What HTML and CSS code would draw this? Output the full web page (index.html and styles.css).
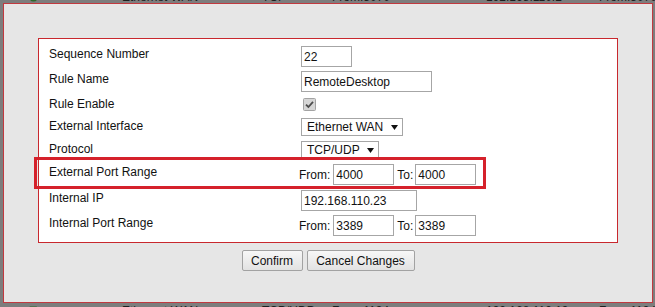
FILE: index.html
```html
<!DOCTYPE html>
<html lang="en">
<head>
  <meta charset="UTF-8" />
  <title>Port Forwarding Rule</title>
  <link rel="stylesheet" href="styles.css">
</head>
<body>

  <!-- tabela atrás do modal -->
  <div class="backdrop">
    <div class="bg-row bg-top">
      <span class="status"><svg width="9" height="9" viewBox="0 0 9 9"><circle cx="4.5" cy="4.5" r="4" fill="#2f6a2a"/></svg></span>
      <span>Ethernet WAN</span>
      <span>TCP</span>
      <span>From:3070</span>
      <span>192.168.110.2</span>
      <span>From:3070</span>
    </div>
    <div class="bg-row bg-bottom">
      <span class="status"><svg width="9" height="9" viewBox="0 0 9 9"><path d="M0.5 0.5 H8 L4.3 6 Z" fill="#2f6a2a"/></svg></span>
      <span>Ethernet WAN</span>
      <span>TCP/UDP</span>
      <span>From:1194</span>
      <span>192.168.110.19</span>
      <span>From:1194</span>
    </div>
  </div>

  <!-- modal -->
  <div class="dialog">
    <div class="form-box">
      <div class="row">
        <span class="label">Sequence Number</span>
        <div class="value"><input class="text w-seq" type="text" value="22"></div>
      </div>
      <div class="row">
        <span class="label">Rule Name</span>
        <div class="value"><input class="text w-name" type="text" value="RemoteDesktop"></div>
      </div>
      <div class="row row-check">
        <span class="label">Rule Enable</span>
        <div class="value">
          <span class="check">
            <svg width="13" height="13" viewBox="0 0 13 13">
              <rect x="0.5" y="0.5" width="12" height="12" rx="1" fill="#d6d6d6" stroke="#a3a3a3"/>
              <path d="M3 6.6 L5.4 9 L10 3.8" fill="none" stroke="#4d4d4d" stroke-width="1.8"/>
            </svg>
          </span>
        </div>
      </div>
      <div class="row row-select">
        <span class="label">External Interface</span>
        <div class="value">
          <span class="select w-iface">Ethernet WAN<svg class="caret" width="7" height="5" viewBox="0 0 7 5"><path d="M0 0 H7 L3.5 5 Z" fill="#111"/></svg></span>
        </div>
      </div>
      <div class="row row-select">
        <span class="label">Protocol</span>
        <div class="value">
          <span class="select w-proto">TCP/UDP<svg class="caret" width="7" height="5" viewBox="0 0 7 5"><path d="M0 0 H7 L3.5 5 Z" fill="#111"/></svg></span>
        </div>
      </div>
      <div class="row row-port highlight">
        <span class="label">External Port Range</span>
        <div class="value">
          <span class="from">From:</span><input class="text w-port" type="text" value="4000">
          <span class="to">To:</span><input class="text w-port" type="text" value="4000">
        </div>
      </div>
      <div class="row">
        <span class="label">Internal IP</span>
        <div class="value"><input class="text w-ip" type="text" value="192.168.110.23"></div>
      </div>
      <div class="row">
        <span class="label">Internal Port Range</span>
        <div class="value">
          <span class="from">From:</span><input class="text w-port" type="text" value="3389">
          <span class="to">To:</span><input class="text w-port" type="text" value="3389">
        </div>
      </div>
    </div>

    <div class="buttons">
      <button class="btn btn-confirm">Confirm</button>
      <button class="btn btn-cancel">Cancel Changes</button>
    </div>
  </div>

</body>
</html>
```

FILE: styles.css
```css
/* Reset básico */
*, *::before, *::after {
  margin: 0;
  padding: 0;
  box-sizing: border-box;
}
body {
  font-family: "Liberation Sans", Arial, sans-serif;
  font-size: 12px;
  color: #111;
  background-color: #7d7d7d;
  width: 655px;
  height: 307px;
  overflow: hidden;
  position: relative;
}

/* --- Tabela de fundo --- */
.backdrop {
  height: 307px;
  display: flex;
  flex-direction: column;
  justify-content: space-between;
  overflow: hidden;
}
.bg-row {
  display: grid;
  grid-template-columns: 93px 140px 70px 154px 113px 1fr;
  padding-left: 29px;
  height: 14px;
  line-height: 14px;
  color: #1e1e1e;
}
.bg-top {
  margin-top: -10px;
}
.bg-bottom {
  margin-bottom: -11px;
}
.status svg {
  display: block;
  margin-top: 3px;
}
.bg-bottom .status svg {
  margin-top: 2px;
}

/* --- Modal --- */
.dialog {
  position: absolute;
  top: 3px;
  left: 3px;
  width: 650px;
  height: 300px;
  background: #e6e6e6;
  border: 1px solid #c1393f;
  padding: 34px 34px 0;
}

.form-box {
  background: #fff;
  border: 1px solid #c8282e;
  padding: 7px 0 1px 10px;
  height: 205px;
}

.row {
  display: grid;
  grid-template-columns: 252px 1fr;
  align-items: start;
  height: 25px;
}
.row-check {
  height: 22px;
}
.row-select {
  height: 23px;
}
.row-port {
  height: 26px;
}

.label {
  line-height: 14px;
  padding-top: 1px;
}

.value {
  display: flex;
  align-items: center;
}

/* Campos de texto */
.text {
  height: 21px;
  border: 1px solid #a6a6a6;
  background: #fff;
  font-family: inherit;
  font-size: 12px;
  color: #111;
  padding: 0 2px;
  outline: none;
}
.w-seq { width: 51px; }
.w-name { width: 131px; }
.w-ip { width: 116px; }
.w-port { width: 61px; }

.from {
  margin-left: -2px;
  margin-right: 3px;
}
.to {
  margin: 0 2px 0 3px;
}

/* Checkbox */
.check svg {
  display: block;
  margin: 2px 0 0 2px;
}

/* Select */
.select {
  display: flex;
  align-items: center;
  justify-content: space-between;
  height: 18px;
  line-height: 16px;
  border: 1px solid #a6a6a6;
  background: #fff;
  padding: 0 4px 0 5px;
}
.w-iface { width: 102px; }
.w-proto { width: 78px; }
.caret {
  display: block;
  margin-top: 1px;
}

/* Destaque vermelho em volta da linha */
.highlight {
  position: relative;
}
.highlight::before {
  content: "";
  position: absolute;
  left: -15px;
  top: -7px;
  width: 452px;
  height: 32px;
  border: 3px solid #d5212b;
}

/* Botões */
.buttons {
  display: flex;
  justify-content: center;
  gap: 4px;
  margin-top: 7px;
}
.btn {
  height: 21px;
  font-family: inherit;
  font-size: 12px;
  color: #111;
  border: 1px solid #a2a2a2;
  border-radius: 2px;
  background: linear-gradient(#f7f7f7, #e2e2e2);
  cursor: pointer;
}
.btn-confirm { width: 61px; }
.btn-cancel { width: 108px; }
```
